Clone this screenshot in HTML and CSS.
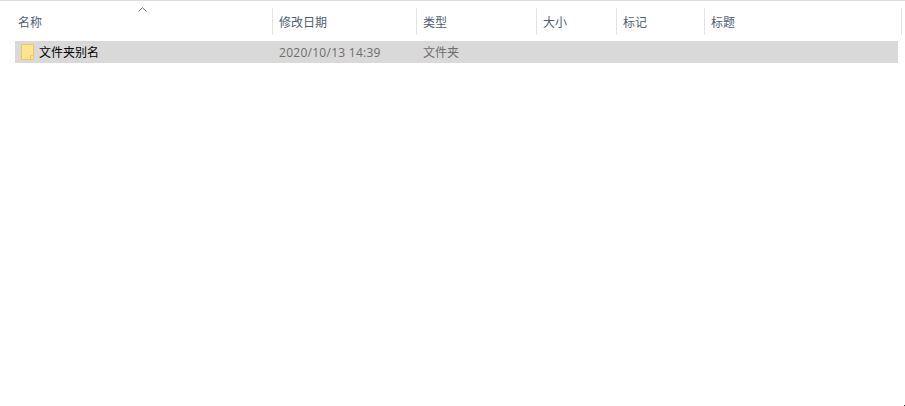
FILE: index.html
```html
<!DOCTYPE html>
<html lang="zh-CN">
  <head>
    <meta charset="UTF-8" />
    <title>文件夹别名</title>
    <link rel="stylesheet" href="styles.css">
  </head>
  <body>
    <div class="list">
      <div class="list-head">
        <div class="col col-name">
          名称
          <svg class="sort-arrow" width="9" height="5" viewBox="0 0 9 5" fill="none" stroke="#6d6d6d" stroke-width="1">
            <polyline points="0.5 4.5 4.5 0.7 8.5 4.5"></polyline>
          </svg>
        </div>
        <div class="col col-date">修改日期</div>
        <div class="col col-type">类型</div>
        <div class="col col-size">大小</div>
        <div class="col col-tag">标记</div>
        <div class="col col-title">标题</div>
      </div>

      <div class="list-row">
        <div class="cell cell-name">
          <svg class="folder" width="13" height="16" viewBox="0 0 13 16">
            <path d="M0.5 0.5H12.5V15.5H0.5Z" fill="#fde58f" stroke="#efc75e"></path>
            <path d="M9.5 15.5V11.5H12.5" fill="none" stroke="#efc75e"></path>
          </svg>
          <span>文件夹别名</span>
        </div>
        <div class="cell cell-date">2020/10/13 14:39</div>
        <div class="cell cell-type">文件夹</div>
      </div>
    </div>
    <div class="corner-dot"></div>
  </body>
</html>
```

FILE: styles.css
```css
* {
  margin: 0;
  padding: 0;
  box-sizing: border-box;
}

html,
body {
  height: 100%;
  overflow: hidden;
}

body {
  position: relative;
  background: #ffffff;
  border-top: 1px solid #dcdcdc;
  font-family: "Open Sans", "Noto Sans CJK SC", sans-serif;
  font-size: 12px;
}

/* Column header */
.list-head {
  display: flex;
  height: 27px;
  margin-top: 7px;
}

.col {
  position: relative;
  display: flex;
  align-items: center;
  padding-top: 1px;
  padding-left: 6px;
  border-right: 1px solid #e3e3e3;
  color: #4f5d73;
}

.col-name {
  width: 273px;
  padding-left: 18px;
}

.col-date {
  width: 144px;
}

.col-type {
  width: 120px;
}

.col-size {
  width: 80px;
}

.col-tag {
  width: 88px;
}

.col-title {
  width: 197px;
}

.sort-arrow {
  position: absolute;
  left: 138px;
  top: -1px;
}

/* Rows */
.list-row {
  display: flex;
  align-items: center;
  width: 883px;
  height: 22px;
  margin: 6px 0 0 15px;
  background: #d9d9d9;
}

.cell {
  display: flex;
  align-items: center;
  color: #6d6d6d;
}

.cell-name {
  width: 258px;
  gap: 5px;
  padding-left: 6px;
  color: #000000;
}

.cell-date {
  width: 144px;
  padding-left: 6px;
  letter-spacing: 0.27px;
}

.cell-type {
  padding-left: 6px;
}

.corner-dot {
  position: absolute;
  right: 0;
  bottom: 0;
  width: 1px;
  height: 1px;
  background: #333333;
}
```
